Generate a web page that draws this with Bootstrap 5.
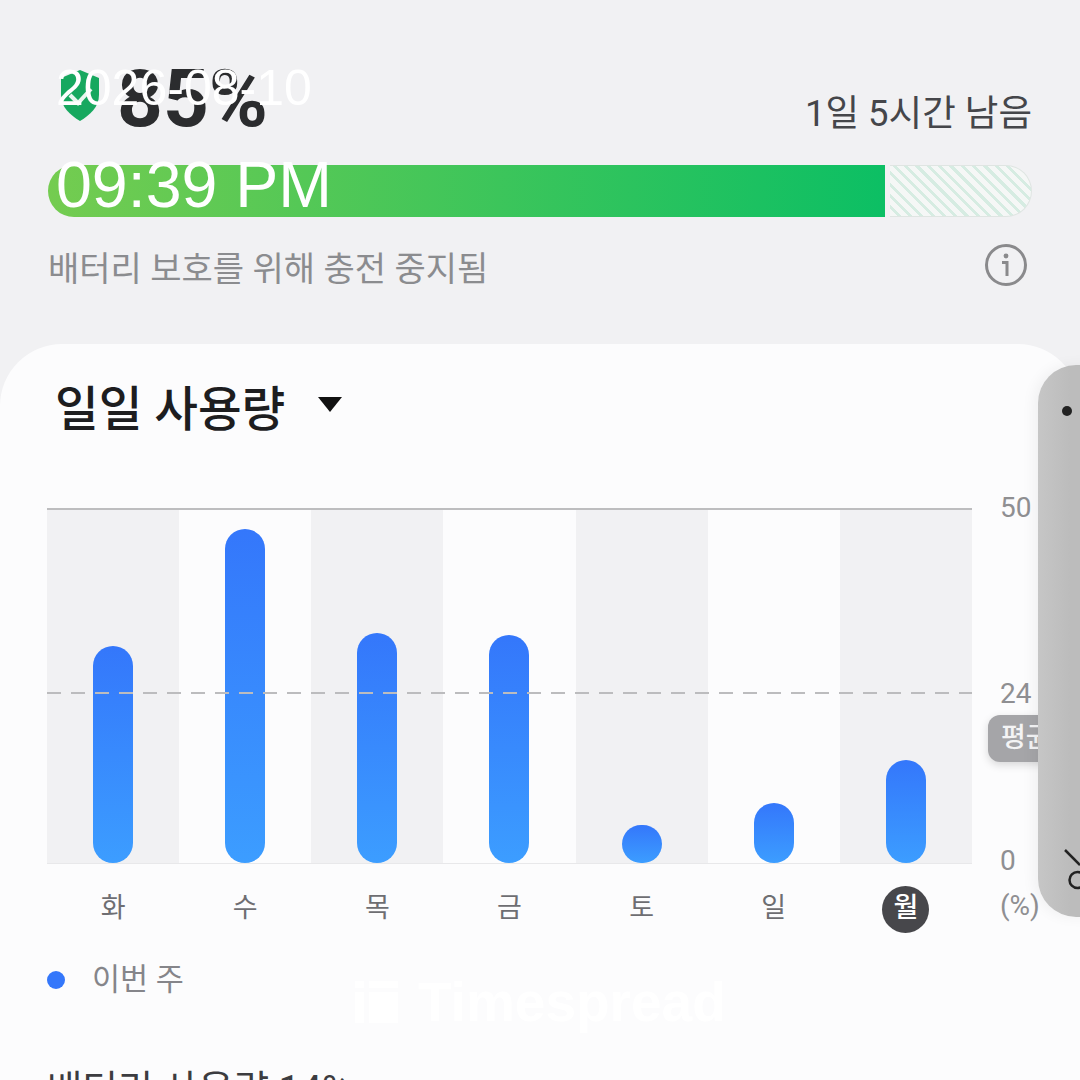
<!DOCTYPE html>
<html lang="ko">
<head>
  <meta charset="UTF-8">
  <title>배터리</title>
  <link href="https://cdn.jsdelivr.net/npm/bootstrap@5.3.3/dist/css/bootstrap.min.css" rel="stylesheet">
  <style>
    html, body { height: 1080px; overflow: hidden; }
    body { background: #f1f1f3; font-family: Roboto, "Noto Sans CJK KR", sans-serif; position: relative; }
    .top-area { padding: 52px 48px 0; height: 344px; }
    .shield { width: 44px; height: 54px; margin: 17px 15px 0 10px; flex: none; }
    .pct { font-size: 80px; font-weight: 700; line-height: 94px; color: #2b2c2e; }
    .remain { font-size: 36.5px; color: #45464a; line-height: 44px; margin-top: 40px; }
    .charge-bar { height: 52px; margin-top: 19px; }
    .charge-fill { width: 837px; background: linear-gradient(90deg, #74cc50, #0cbf64); border-radius: 26px 0 0 26px; }
    .charge-rest { margin-left: 5px; flex: 1; border: 1px solid #dfe5e2; border-left: 0; border-radius: 0 26px 26px 0;
      background: repeating-linear-gradient(45deg, #f5f7f6 0 5px, #d6ece2 5px 8px); }
    .caption { font-size: 34px; color: #8b8c8f; line-height: 44px; margin-top: 30px; }
    .info-ic { width: 44px; height: 44px; margin-right: 4px; margin-top: 26px; }

    .sheet { background: #fcfcfd; border-radius: 62px 62px 0 0; height: 736px; padding: 36px 0 0 47px; }
    .sheet-title { font-size: 47.5px; font-weight: 500; line-height: 60px; color: #1d1d1f; margin-left: 8px; }
    .caret-down { width: 0; height: 0; border-left: 12px solid transparent; border-right: 12px solid transparent; border-top: 15px solid #111; margin-left: 33px; margin-top: -12px; }

    .chart-wrap { margin-top: 68px; }
    .plot { width: 925px; height: 356px; border-top: 2px solid #bdbdbf; border-bottom: 1px solid #e8e8ea; position: relative; }
    .day-col { flex: 1; display: flex; align-items: flex-end; justify-content: center; }
    .day-col.shade { background: #f1f1f3; }
    .day-bar { width: 40px; border-radius: 20px; background: linear-gradient(180deg, #3477fb, #3c9dff); }
    .avg-line { position: absolute; left: 0; right: 0; top: 182px; height: 2px;
      background: repeating-linear-gradient(90deg, #bcbcbe 0 14px, transparent 14px 24px); }
    .axis { margin-left: 28px; margin-top: -17px; font-size: 28px; color: #8f8f92; line-height: 34px; flex: none; }
    .axis div { height: 34px; }
    .days { width: 925px; height: 46px; margin-top: 21px; }
    .days > div { flex: 1; text-align: center; font-size: 27px; color: #6e6e72; line-height: 46px; height: 46px; }
    .today { display: inline-block; width: 47px; height: 47px; line-height: 45px; margin-top: 1px; border-radius: 50%; background: #47474b; color: #fff; font-weight: 500; }
    .legend-row { margin-top: 27px; font-size: 30.5px; color: #85858a; line-height: 44px; }
    .legend-dot { width: 18px; height: 18px; border-radius: 50%; background: #3477fb; margin: 0 27px 0 0; }
    .usage { font-size: 38.5px; color: #3c3c40; margin-top: 66px; line-height: 44px; }

    /* things sitting on top of the screen */
    .stamp { position: absolute; left: 56px; color: #fff; font-family: "Liberation Sans", sans-serif; white-space: nowrap; }
    .stamp-date { top: 60px; font-size: 50px; line-height: 56px; }
    .stamp-time { top: 150px; font-size: 64.5px; line-height: 70px; }
    .avg-tag { position: absolute; left: 988px; top: 715px; width: 70px; height: 47px; background: #a5a5a8; border-radius: 12px; color: #f4f4f5; font-size: 27px; font-weight: 500; line-height: 47px; padding-left: 13px; box-shadow: 0 3px 8px rgba(0,0,0,.15); white-space: nowrap; overflow: hidden; }
    .edge-panel { position: absolute; left: 1038px; top: 365px; width: 80px; height: 552px; border-radius: 38px 0 0 38px; background: linear-gradient(90deg, #c6c6c6, #bcbcbc 40%); box-shadow: -4px 0 14px rgba(0,0,0,.05); }
    .edge-dot { position: absolute; left: 24px; top: 41px; width: 10px; height: 10px; border-radius: 50%; background: #222; }
    .edge-ic { position: absolute; left: 24px; top: 482px; width: 30px; height: 46px; }
    .wm { position: absolute; left: 355px; top: 972px; color: #fff; font-family: "Liberation Sans", sans-serif; font-weight: 700; font-size: 55px; line-height: 60px; }
    .wm-mark { width: 43px; height: 42px; margin-right: 20px; }
  </style>
</head>
<body>
  <div class="top-area">
    <div class="d-flex justify-content-between align-items-start">
      <div class="d-flex align-items-start">
        <svg class="shield" viewBox="0 0 44 54"><path d="M22 1 L41 9 V26 C41 38 32 46 22 52 C12 46 3 38 3 26 V9 Z" fill="#17a85f"/><path d="M12 26 L20 34 L33 20" fill="none" stroke="#e9f6ef" stroke-width="4"/></svg>
        <div class="pct">85%</div>
      </div>
      <div class="remain">1일 5시간 남음</div>
    </div>
    <div class="charge-bar d-flex">
      <div class="charge-fill"></div>
      <div class="charge-rest"></div>
    </div>
    <div class="d-flex justify-content-between align-items-start">
      <div class="caption">배터리 보호를 위해 충전 중지됨</div>
      <svg class="info-ic" viewBox="0 0 44 44"><circle cx="22" cy="22" r="19.5" fill="none" stroke="#8a8a8c" stroke-width="3"/><circle cx="22" cy="13" r="2.4" fill="#8a8a8c"/><path d="M18 19.5 H23 V33" fill="none" stroke="#8a8a8c" stroke-width="3"/></svg>
    </div>
  </div>

  <div class="sheet">
    <div class="d-flex align-items-center">
      <div class="sheet-title">일일 사용량</div>
      <div class="caret-down"></div>
    </div>

    <div class="chart-wrap d-flex align-items-start">
      <div>
        <div class="plot d-flex">
          <div class="day-col shade"><div class="day-bar" style="height:217px"></div></div>
          <div class="day-col"><div class="day-bar" style="height:334px"></div></div>
          <div class="day-col shade"><div class="day-bar" style="height:230px"></div></div>
          <div class="day-col"><div class="day-bar" style="height:228px"></div></div>
          <div class="day-col shade"><div class="day-bar" style="height:38px"></div></div>
          <div class="day-col"><div class="day-bar" style="height:60px"></div></div>
          <div class="day-col shade"><div class="day-bar" style="height:103px"></div></div>
          <div class="avg-line"></div>
        </div>
        <div class="days d-flex">
          <div>화</div><div>수</div><div>목</div><div>금</div><div>토</div><div>일</div><div><span class="today">월</span></div>
        </div>
      </div>
      <div class="axis">
        <div>50</div>
        <div style="margin-top:152px">24</div>
        <div style="margin-top:133px">0</div>
        <div style="margin-top:11px">(%)</div>
      </div>
    </div>

    <div class="legend-row d-flex align-items-center"><span class="legend-dot"></span><span>이번 주</span></div>
    <div class="usage">배터리 사용량 14%</div>
  </div>

  <div class="stamp stamp-date">2026-08-10</div>
  <div class="stamp stamp-time">09:39 PM</div>

  <div class="avg-tag">평균</div>
  <div class="edge-panel">
    <div class="edge-dot"></div>
    <svg class="edge-ic" viewBox="0 0 30 46"><path d="M3 3 L18 18" fill="none" stroke="#222" stroke-width="2.5"/><circle cx="15.5" cy="33" r="8" fill="none" stroke="#222" stroke-width="2.5"/></svg>
  </div>

  <div class="wm d-flex align-items-center">
    <svg class="wm-mark" viewBox="0 0 43 42"><rect x="0" y="0" width="9" height="7" fill="#fff"/><rect x="0" y="11" width="9" height="31" fill="#fff"/><rect x="14" y="0" width="29" height="7" fill="#fff"/><rect x="14" y="11" width="29" height="31" fill="#fff"/></svg>
    <span>Timespread</span>
  </div>
</body>
</html>
